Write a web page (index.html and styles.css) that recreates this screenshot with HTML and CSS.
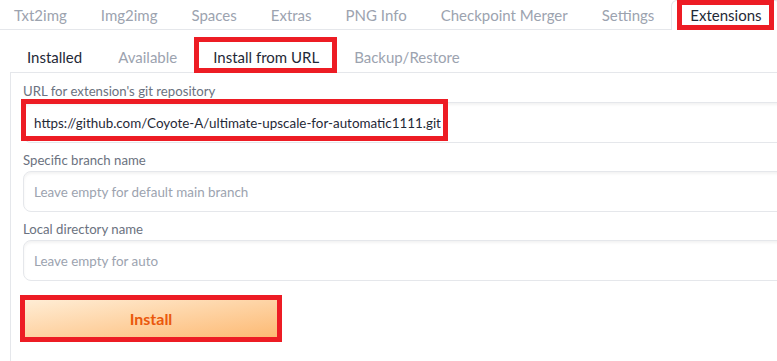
FILE: index.html
```html
<!DOCTYPE html>
<html lang="en">
<head>
    <meta charset="UTF-8">
    <title>Extensions - Install from URL</title>
    <link rel="stylesheet" href="styles.css">
</head>
<body>
    <div class="page">
        <div class="top-tabs">
            <button class="tab">Txt2img</button>
            <button class="tab">Img2img</button>
            <button class="tab">Spaces</button>
            <button class="tab">Extras</button>
            <button class="tab">PNG Info</button>
            <button class="tab">Checkpoint Merger</button>
            <button class="tab">Settings</button>
            <button class="tab active"><span class="mark-label">Extensions</span></button>
        </div>

        <div class="sub-tabs">
            <button class="sub-tab dark">Installed</button>
            <button class="sub-tab">Available</button>
            <button class="sub-tab active">Install from URL</button>
            <button class="sub-tab">Backup/Restore</button>
        </div>

        <div class="panel">
            <div class="field">
                <label class="field-label">URL for extension's git repository</label>
                <div class="input-wrap">
                    <input class="text-input" type="text" value="https://github.com/Coyote-A/ultimate-upscale-for-automatic1111.git">
                    <div class="url-mark"></div>
                </div>
            </div>
            <div class="field">
                <label class="field-label">Specific branch name</label>
                <div class="input-wrap">
                    <input class="text-input" type="text" placeholder="Leave empty for default main branch">
                </div>
            </div>
            <div class="field">
                <label class="field-label">Local directory name</label>
                <div class="input-wrap">
                    <input class="text-input" type="text" placeholder="Leave empty for auto">
                </div>
            </div>
            <div class="install-mark">
                <button class="install-btn">Install</button>
            </div>
        </div>
    </div>
</body>
</html>
```

FILE: styles.css
```css
body {
    margin: 0;
    padding: 0;
    background: #ffffff;
    font-family: 'Lato', 'Liberation Sans', sans-serif;
    overflow: hidden;
}

.page {
    width: 1100px;
}

button {
    font-family: inherit;
    background: none;
    border: none;
    box-sizing: border-box;
    cursor: pointer;
}

/* main tab bar */
.top-tabs {
    display: flex;
    gap: 4px;
    height: 29px;
    border-bottom: 1px solid #e5e7eb;
}

.top-tabs .tab {
    padding: 0 15px;
    height: 29px;
    font-size: 15px;
    color: #9ca3af;
}

.top-tabs .tab:first-child {
    margin-left: -1px;
}

.top-tabs .tab.active {
    margin-left: -2px;
    padding: 0 6px 0 5px;
    height: 30px;
    background: #ffffff;
    border: 1px solid #e5e7eb;
    border-bottom: none;
    border-radius: 6px 6px 0 0;
    color: #1f2937;
}

.mark-label {
    display: block;
    height: 30px;
    box-sizing: border-box;
    padding: 0 7px 0 8px;
    line-height: 20px;
    border: 5px solid #ed1c24;
    margin-top: -1px;
}

/* extension sub tabs */
.sub-tabs {
    display: flex;
    height: 42px;
    margin-left: 10px;
    align-items: flex-end;
}

.sub-tab {
    height: 30px;
    padding: 0 18px;
    font-size: 15px;
    color: #9ca3af;
}

.sub-tab:first-child {
    margin-left: -1px;
}

.sub-tab.dark {
    color: #1f2937;
}

.sub-tab.active {
    position: relative;
    z-index: 1;
    height: 36px;
    margin: 0 -1px -1px -1px;
    padding: 4px 13px 0 14px;
    border: 5px solid #ed1c24;
    background: #ffffff;
    color: #1f2937;
}

/* form panel */
.panel {
    margin-left: 10px;
    border: 1px solid #e5e7eb;
    border-right: none;
    padding: 8px 0 30px 12px;
    height: 300px;
}

.field {
    margin-bottom: 7px;
}

.field-label {
    display: block;
    font-size: 13.2px;
    line-height: 20px;
    margin-bottom: 1px;
    color: #6b7280;
}

.input-wrap {
    position: relative;
}

.text-input {
    display: block;
    width: 100%;
    height: 41px;
    box-sizing: border-box;
    padding: 0 10px;
    border: 1px solid #e5e7eb;
    border-radius: 8px;
    box-shadow: inset 0 2px 3px rgba(0, 0, 0, 0.05);
    font-family: inherit;
    font-size: 13.4px;
    color: #1f2937;
    outline: none;
}

.text-input::placeholder {
    color: #9ca3af;
}

.url-mark {
    position: absolute;
    left: -2px;
    top: -3px;
    width: 427px;
    height: 42px;
    box-sizing: border-box;
    border: 5px solid #ed1c24;
}

.install-mark {
    margin: 14px 0 0 -3px;
    width: 262px;
    height: 47px;
    box-sizing: border-box;
    border: 5px solid #ed1c24;
}

.install-btn {
    display: block;
    width: 100%;
    height: 100%;
    background: linear-gradient(to bottom right, #ffedd5, #fdba74);
    color: #ea580c;
    font-size: 16px;
    font-weight: 700;
}
```
